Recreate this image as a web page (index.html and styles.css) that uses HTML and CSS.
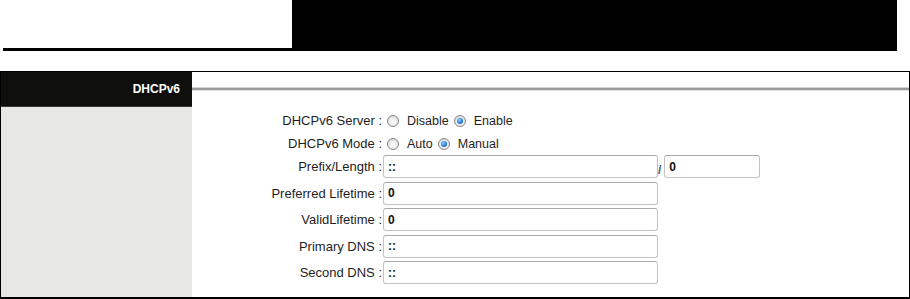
FILE: index.html
```html
<!DOCTYPE html>
<html lang="en">

<head>
    <meta charset="UTF-8">
    <title>DHCPv6</title>
    <link rel="stylesheet" href="styles.css">
</head>

<body>
    <header class="banner">
        <div class="logo"></div>
        <div class="banner-bar"></div>
    </header>

    <div class="frame">
        <aside class="side">
            <div class="side-title">DHCPv6</div>
            <div class="side-body"></div>
        </aside>

        <main class="content">
            <div class="rule"></div>
            <form class="form">
                <div class="row row-radio">
                    <label class="label">DHCPv6 Server :</label>
                    <div class="field">
                        <input type="radio" name="server" id="srv-off"><label for="srv-off">Disable</label>
                        <input type="radio" name="server" id="srv-on" checked><label for="srv-on">Enable</label>
                    </div>
                </div>
                <div class="row row-radio">
                    <label class="label">DHCPv6 Mode :</label>
                    <div class="field">
                        <input type="radio" name="mode" id="mode-auto"><label for="mode-auto">Auto</label>
                        <input type="radio" name="mode" id="mode-manual" checked><label for="mode-manual">Manual</label>
                    </div>
                </div>
                <div class="row">
                    <label class="label">Prefix/Length :</label>
                    <div class="field">
                        <input type="text" class="text-box" value="::">
                        <span class="slash">/</span>
                        <input type="text" class="text-box short" value="0">
                    </div>
                </div>
                <div class="row">
                    <label class="label">Preferred Lifetime :</label>
                    <div class="field"><input type="text" class="text-box" value="0"></div>
                </div>
                <div class="row">
                    <label class="label">ValidLifetime :</label>
                    <div class="field"><input type="text" class="text-box" value="0"></div>
                </div>
                <div class="row">
                    <label class="label">Primary DNS :</label>
                    <div class="field"><input type="text" class="text-box" value="::"></div>
                </div>
                <div class="row">
                    <label class="label">Second DNS :</label>
                    <div class="field"><input type="text" class="text-box" value="::"></div>
                </div>
            </form>
        </main>
    </div>
</body>

</html>
```

FILE: styles.css
```css
/* General Styles */
body {
    font-family: "Liberation Sans", Arial, sans-serif;
    margin: 0;
    padding: 0;
    background: #fff;
    color: #1e1e1e;
    width: 910px;
    height: 299px;
    overflow: hidden;
}

/* Banner */
.banner {
    display: flex;
    padding-left: 3px;
}

.logo {
    width: 289px;
    height: 48px;
    border-bottom: 3px solid #000;
}

.banner-bar {
    width: 605px;
    height: 51px;
    background: #000;
}

/* Frame */
.frame {
    display: flex;
    margin-top: 20px;
    height: 225px;
    border: 1px solid #000;
    border-bottom-width: 2px;
}

.side {
    width: 191px;
    display: flex;
    flex-direction: column;
}

.side-title {
    height: 34px;
    background: #0f0f0d;
    color: #fff;
    font-weight: bold;
    font-size: 12px;
    text-align: right;
    padding-right: 12px;
    line-height: 34px;
    border-bottom: 1px solid #3a3a3a;
}

.side-body {
    flex: 1;
    background: #e7e7e5;
}

/* Main Content */
.content {
    flex: 1;
    padding-top: 15px;
}

.rule {
    height: 2px;
    background: #9a9a9a;
    border-top: 1px solid #d2d2d2;
    border-bottom: 1px solid #e2e2e2;
}

.form {
    margin-top: 18px;
    font-size: 13px;
}

.row {
    display: flex;
    align-items: flex-start;
    height: 26.5px;
}

.row-radio {
    height: 23px;
    align-items: center;
}

.label {
    width: 190px;
    text-align: right;
    flex: none;
    line-height: 23px;
}

.row-radio .label {
    line-height: normal;
}

.field {
    display: flex;
    align-items: center;
    margin-left: 1px;
}

.field label {
    font-size: 12.5px;
    margin-right: 1px;
}

/* Radios */
input[type="radio"] {
    appearance: none;
    -webkit-appearance: none;
    width: 12px;
    height: 12px;
    margin: 0 8px 0 4px;
    border: 1px solid #848484;
    border-radius: 50%;
    background: radial-gradient(circle at 50% 60%, #fff 0, #eeeeee 45%, #cfcfcf 100%);
    box-sizing: border-box;
    position: relative;
}

input[type="radio"]:checked::after {
    content: "";
    position: absolute;
    left: 2px;
    top: 2px;
    width: 6px;
    height: 6px;
    border-radius: 50%;
    background: radial-gradient(circle at 40% 35%, #8ad0ff 0, #2b7de0 55%, #0d3f8c 100%);
}

/* Text boxes */
.text-box {
    width: 275px;
    height: 23px;
    box-sizing: border-box;
    margin: 0;
    padding: 0 4px;
    border: 1px solid #c3c3c3;
    border-top-color: #a9a9a9;
    border-radius: 3px;
    font-family: "Liberation Sans", Arial, sans-serif;
    font-size: 12px;
    font-weight: bold;
    color: #111;
    background: #fff;
}

.text-box.short {
    width: 96px;
    margin-left: 3px;
}

.slash {
    font-size: 12px;
    font-weight: bold;
    color: #3b5a85;
    margin-top: 6px;
}
```
